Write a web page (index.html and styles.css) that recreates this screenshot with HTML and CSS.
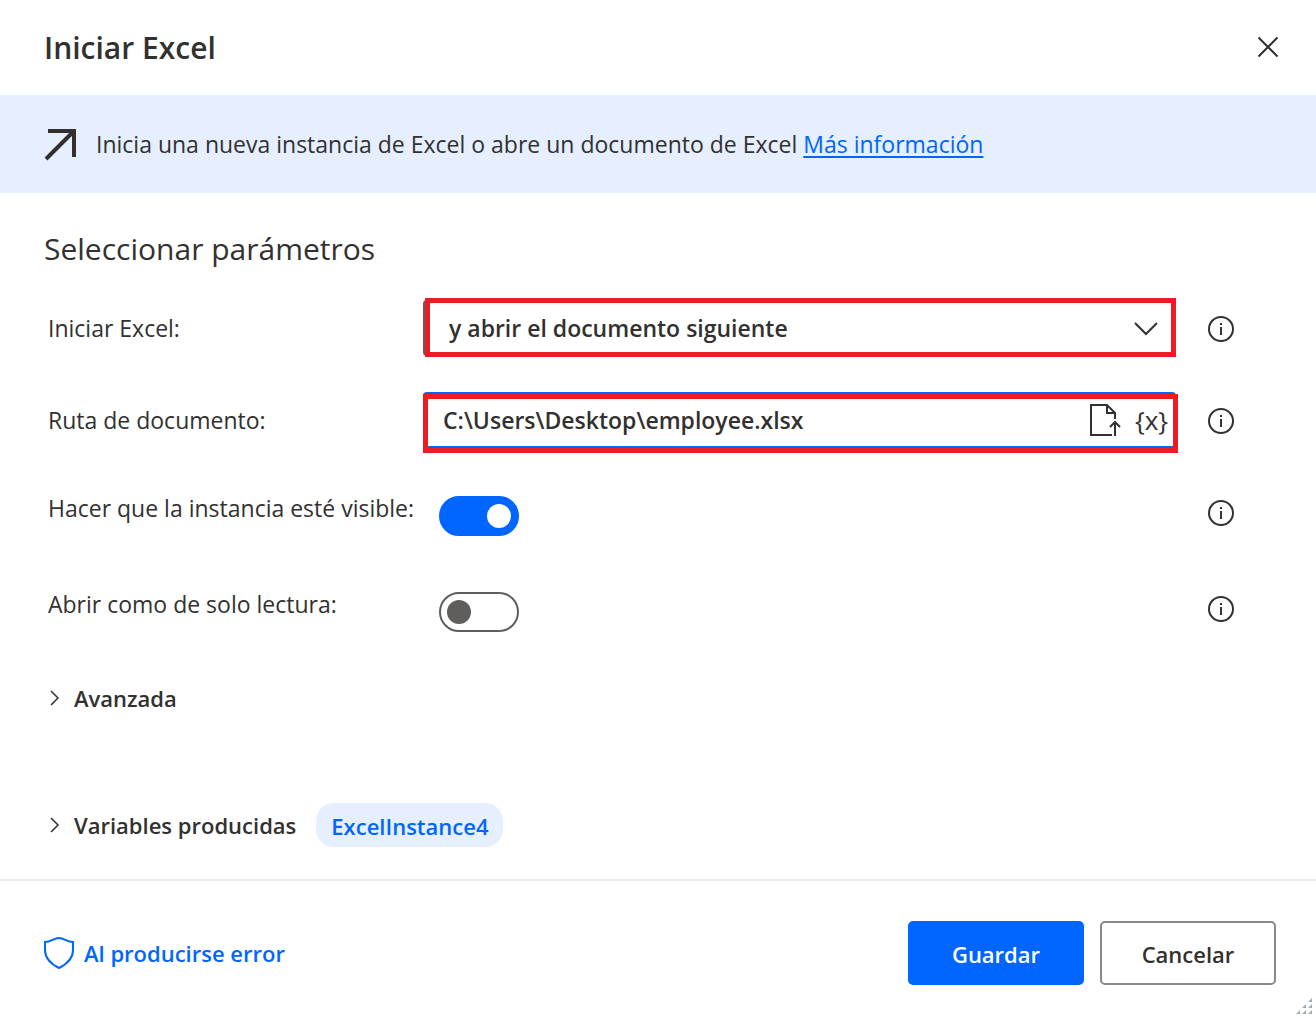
FILE: index.html
```
<!DOCTYPE html>
<html lang="es">
<head>
    <meta charset="UTF-8">
    <meta name="viewport" content="width=device-width, initial-scale=1">
    <title>Iniciar Excel</title>
    <link rel="stylesheet" href="styles.css">
</head>
<body>
<form class="dialog">
    <header class="titlebar">
        <h1>Iniciar Excel</h1>
        <button type="button" class="close" aria-label="Cerrar">
            <svg width="22" height="22" viewBox="0 0 22 22"><path d="M1.500 1.500L20.500 20.500M20.500 1.500L1.500 20.500"/></svg>
        </button>
    </header>
    <div class="banner">
        <svg class="arrow" width="34" height="34" viewBox="0 0 34 34"><path d="M4 4H30V30M2 32L29 5"/></svg>
        <p>Inicia una nueva instancia de Excel o abre un documento de Excel <a href="#">Más información</a></p>
    </div>
    <main>
        <h2>Seleccionar parámetros</h2>
        <div class="row">
            <label for="modo">Iniciar Excel:</label>
            <div class="field field-select">
                <select id="modo">
                    <option>y abrir el documento siguiente</option>
                    <option>con un documento en blanco</option>
                </select>
                <svg class="chevron" width="26" height="16" viewBox="0 0 26 16"><path d="M2 3L13 14L24 3"/></svg>
            </div>
            <button type="button" class="info" aria-label="Información">
                <svg width="26" height="26" viewBox="0 0 26 26"><circle cx="13" cy="13" r="12"/><path d="M13 11V19M13 7V9"/></svg>
            </button>
        </div>
        <div class="row">
            <label for="ruta">Ruta de documento:</label>
            <div class="field field-path">
                <input type="text" id="ruta" value="C:\Users\Desktop\employee.xlsx" spellcheck="false">
                <button type="button" class="file" aria-label="Seleccionar archivo">
                    <svg width="32" height="34" viewBox="0 0 32 34"><path d="M23 32H2V2H18L26 10V16M18 2V10H26M26 33V20M21 24L26 19L31 24"/></svg>
                </button>
                <button type="button" class="var">{x}</button>
            </div>
            <button type="button" class="info" aria-label="Información">
                <svg width="26" height="26" viewBox="0 0 26 26"><circle cx="13" cy="13" r="12"/><path d="M13 11V19M13 7V9"/></svg>
            </button>
        </div>
        <div class="row row-toggle">
            <label for="visible">Hacer que la instancia esté visible:</label>
            <input type="checkbox" class="toggle" id="visible" checked>
            <button type="button" class="info" aria-label="Información">
                <svg width="26" height="26" viewBox="0 0 26 26"><circle cx="13" cy="13" r="12"/><path d="M13 11V19M13 7V9"/></svg>
            </button>
        </div>
        <div class="row row-toggle">
            <label for="lectura">Abrir como de solo lectura:</label>
            <input type="checkbox" class="toggle" id="lectura">
            <button type="button" class="info" aria-label="Información">
                <svg width="26" height="26" viewBox="0 0 26 26"><circle cx="13" cy="13" r="12"/><path d="M13 11V19M13 7V9"/></svg>
            </button>
        </div>
        <div class="section">
            <button type="button" class="expand">
                <svg width="10" height="16" viewBox="0 0 10 16"><path d="M1 1L8 8L1 15"/></svg>
                Avanzada
            </button>
        </div>
        <div class="section section-vars">
            <button type="button" class="expand">
                <svg width="10" height="16" viewBox="0 0 10 16"><path d="M1 1L8 8L1 15"/></svg>
                Variables producidas
            </button>
            <button type="button" class="chip">ExcelInstance4</button>
        </div>
    </main>
    <footer>
        <a href="#" class="on-error">
            <svg width="32" height="34" viewBox="0 0 32 34"><path d="M2 6C8 6 11 2 16 2S24 6 30 6V14C30 22 24 28 16 32C8 28 2 22 2 14Z"/></svg>
            Al producirse error
        </a>
        <button type="submit" class="btn btn-primary">Guardar</button>
        <button type="button" class="btn">Cancelar</button>
        <!-- tirador para cambiar el tamaño -->
        <svg class="grip" width="20" height="20" viewBox="0 0 20 20"><path d="M16 4V0L12 4ZM10 10V6L6 10ZM16 10V6L12 10ZM4 16V12L0 16ZM10 16V12L6 16ZM16 16V12L12 16Z"/></svg>
    </footer>
</form>
</body>
</html>
```
FILE: styles.css
```
* {
    box-sizing: border-box;
    margin: 0;
    padding: 0;
}
body {
    background-color: #fff;
    color: #323130;
    font-family: "Segoe UI", "Open Sans", "Noto Sans", sans-serif;
    font-size: 23px;
    line-height: 32px;
}
button, input, select {
    font: inherit;
    color: inherit;
    background: none;
    border: none;
}
button {
    cursor: pointer;
}
svg {
    display: block;
    flex: none;
    fill: none;
    stroke: currentColor;
    stroke-width: 2;
}
a {
    color: #0066ff;
}
.dialog {
    display: flex;
    flex-direction: column;
    min-height: 100vh;
}
.titlebar {
    display: flex;
    align-items: center;
    justify-content: space-between;
    height: 95px;
    padding: 0 37px 0 44px;
}
.close {
    padding-bottom: 2px;
}
h1 {
    font-size: 30px;
    font-weight: 600;
}
.banner {
    display: flex;
    align-items: center;
    gap: 18px;
    min-height: 98px;
    padding: 0 44px;
    background-color: #e5efff;
}
.banner a {
    text-decoration-thickness: 2px;
    text-underline-offset: 3px;
}
.arrow {
    stroke-width: 4;
}
main {
    flex: 1;
    padding: 32px 82px 32px 48px;
}
h2 {
    margin: 0 0 27px -4px;
    font-size: 30px;
    font-weight: 400;
    line-height: 48px;
}
.row {
    display: grid;
    grid-template-columns: 375px 1fr 58px;
    align-items: center;
    min-height: 56px;
    margin-bottom: 36px;
}
.row-toggle {
    align-items: start;
    min-height: 60px;
}
.row-toggle label {
    margin-top: 8px;
}
.info {
    justify-self: end;
    padding-top: 2px;
}
.row-toggle .info {
    margin-top: 14px;
}
.field {
    position: relative;
    display: flex;
    align-items: center;
    height: 56px;
    border: 2px solid #605e5c;
    border-radius: 4px;
    font-weight: 600;
}
/* marco rojo que resalta el campo */
.field::after {
    content: "";
    position: absolute;
    border: 5px solid #ed1c24;
    pointer-events: none;
}
.field-select::after {
    inset: -4px -2px -3px 0;
}
.field-path {
    border-color: #0066ff;
    padding-right: 6px;
}
.field-path::after {
    inset: 0 -4px -7px -2px;
}
.field select {
    flex: 1;
    height: 100%;
    padding-left: 24px;
    appearance: none;
}
.chevron {
    position: absolute;
    right: 15px;
    pointer-events: none;
}
.field input {
    flex: 1;
    min-width: 0;
    height: 100%;
    padding-left: 18px;
    outline: none;
}
.var {
    margin-left: 14px;
    font-size: 26px;
    font-weight: 400;
}
.toggle {
    appearance: none;
    width: 80px;
    height: 40px;
    margin: 12px 0 0 16px;
    padding: 6px;
    border: 2px solid #605e5c;
    border-radius: 20px;
    cursor: pointer;
}
.toggle::before {
    content: "";
    display: block;
    width: 24px;
    height: 24px;
    border-radius: 50%;
    background-color: #605e5c;
}
.toggle:checked {
    border-color: #0066ff;
    background-color: #0066ff;
}
.toggle:checked::before {
    margin-left: auto;
    background-color: #fff;
}
.section {
    display: flex;
    align-items: center;
    gap: 20px;
    min-height: 44px;
}
.section-vars {
    margin-top: 83px;
}
.expand, .chip, .on-error, .btn {
    font-size: 22px;
    font-weight: 600;
}
.expand {
    display: flex;
    align-items: center;
    gap: 14px;
    padding-left: 2px;
}
.expand svg {
    stroke-width: 1.500;
}
.chip {
    height: 44px;
    padding: 2px 15px 0;
    border-radius: 18px;
    background-color: #e5efff;
    color: #0066ff;
}
footer {
    position: relative;
    display: flex;
    align-items: center;
    gap: 16px;
    height: 139px;
    padding: 7px 40px 0 43px;
    border-top: 2px solid #eaeaea;
}
.on-error {
    display: flex;
    align-items: center;
    gap: 9px;
    margin-right: auto;
    text-decoration: none;
}
.btn {
    width: 176px;
    height: 64px;
    padding-top: 2px;
    border: 2px solid #8a8886;
    border-radius: 5px;
}
.btn-primary {
    border-color: #0066ff;
    background-color: #0066ff;
    color: #fff;
}
.grip {
    position: absolute;
    right: 0;
    bottom: 0;
    fill: #a3abb8;
    stroke: none;
}
```
